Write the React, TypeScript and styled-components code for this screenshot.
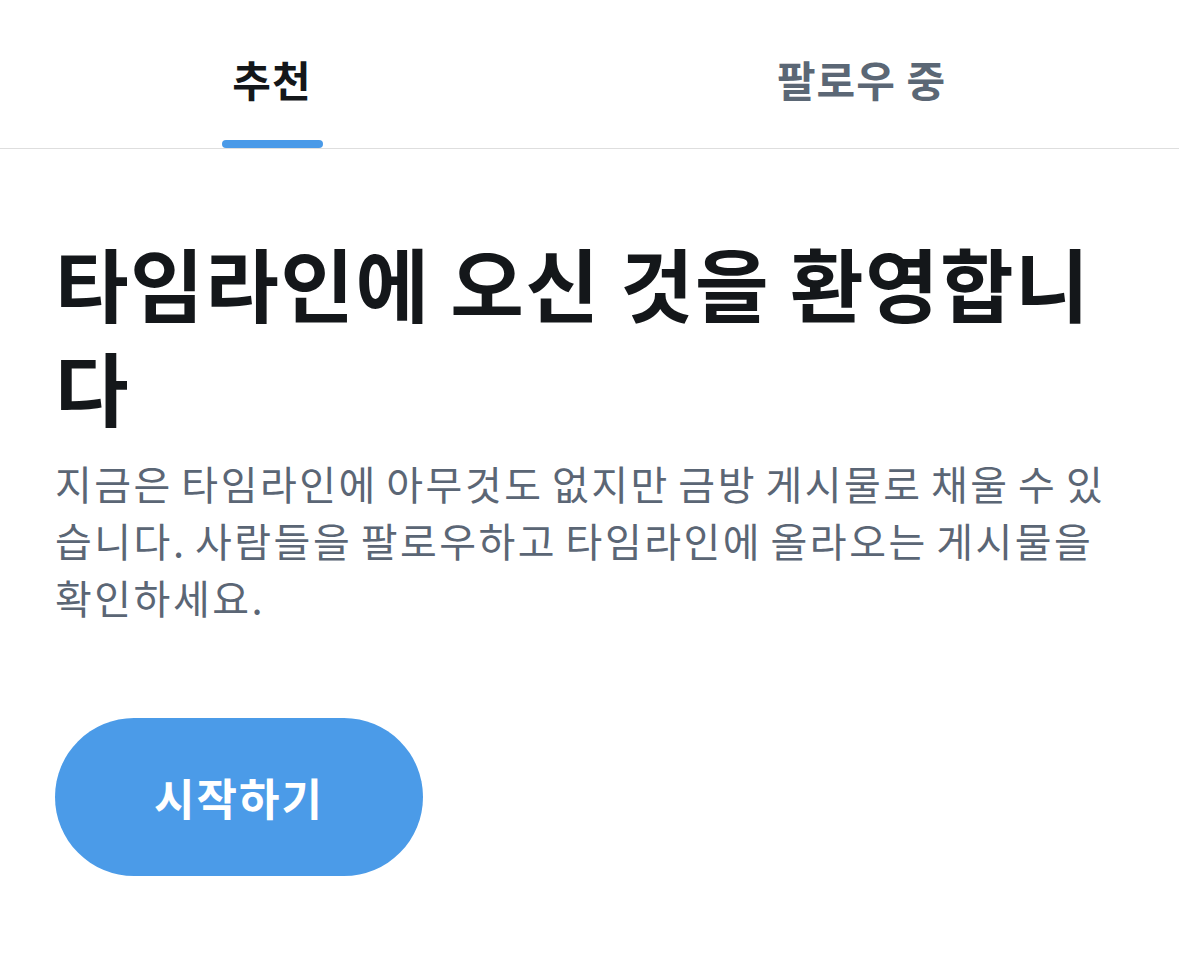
import React from 'react';
import styled, { createGlobalStyle } from 'styled-components';

const tabs = [
  { label: '추천', active: true },
  { label: '팔로우 중', active: false },
];

function App() {
  return (
    <>
      <GlobalStyle />
      <Page>
        <TabBar>
          {tabs.map((tab) => (
            <Tab key={tab.label}>
              <TabLabel active={tab.active}>{tab.label}</TabLabel>
              <Indicator active={tab.active} />
            </Tab>
          ))}
        </TabBar>

        <Content>
          <Heading>타임라인에 오신 것을 환영합니다</Heading>
          <Description>
            지금은 타임라인에 아무것도 없지만 금방 게시물로 채울 수 있습니다.
            사람들을 팔로우하고 타임라인에 올라오는 게시물을 확인하세요.
          </Description>
          <StartButton type="button">시작하기</StartButton>
        </Content>
      </Page>
    </>
  );
}

const GlobalStyle = createGlobalStyle`
  html, body {
    margin: 0;
    padding: 0;
    background: #ffffff;
  }

  body {
    font-family: 'Noto Sans CJK KR', 'Noto Sans', sans-serif;
  }
`;

const Page = styled.div`
  width: 1179px;
  min-height: 969px;
  background: #ffffff;
`;

const TabBar = styled.div`
  display: grid;
  grid-template-columns: 544px 1fr;
  height: 148px;
  border-bottom: 1px solid #dedede;
`;

const Tab = styled.div`
  display: flex;
  flex-direction: column;
  align-items: center;
  justify-content: flex-end;
`;

const TabLabel = styled.span<{ active: boolean }>`
  font-size: 42px;
  font-weight: 700;
  line-height: 1;
  letter-spacing: 1px;
  color: ${(props) => (props.active ? '#14171a' : '#5b6775')};
  margin-bottom: 40px;
`;

const Indicator = styled.div<{ active: boolean }>`
  width: 101px;
  height: 8px;
  border-radius: 4px;
  background: ${(props) => (props.active ? '#4a9ae8' : 'transparent')};
`;

const Content = styled.div`
  padding: 80px 55px 0;
`;

const Heading = styled.h1`
  margin: 0;
  font-size: 80px;
  font-weight: 700;
  line-height: 104px;
  letter-spacing: 1.5px;
  color: #14171a;
`;

const Description = styled.p`
  margin: 18px 0 0;
  font-size: 40px;
  font-weight: 400;
  line-height: 57px;
  letter-spacing: 2.5px;
  word-spacing: -3px;
  color: #5b6675;
`;

const StartButton = styled.button`
  display: flex;
  align-items: center;
  justify-content: center;
  margin-top: 92px;
  width: 368px;
  height: 158px;
  border: none;
  border-radius: 79px;
  background: #4b9be8;
  color: #ffffff;
  font-family: inherit;
  font-size: 44px;
  font-weight: 700;
  letter-spacing: 2px;
  padding: 0;
`;

export default App;
